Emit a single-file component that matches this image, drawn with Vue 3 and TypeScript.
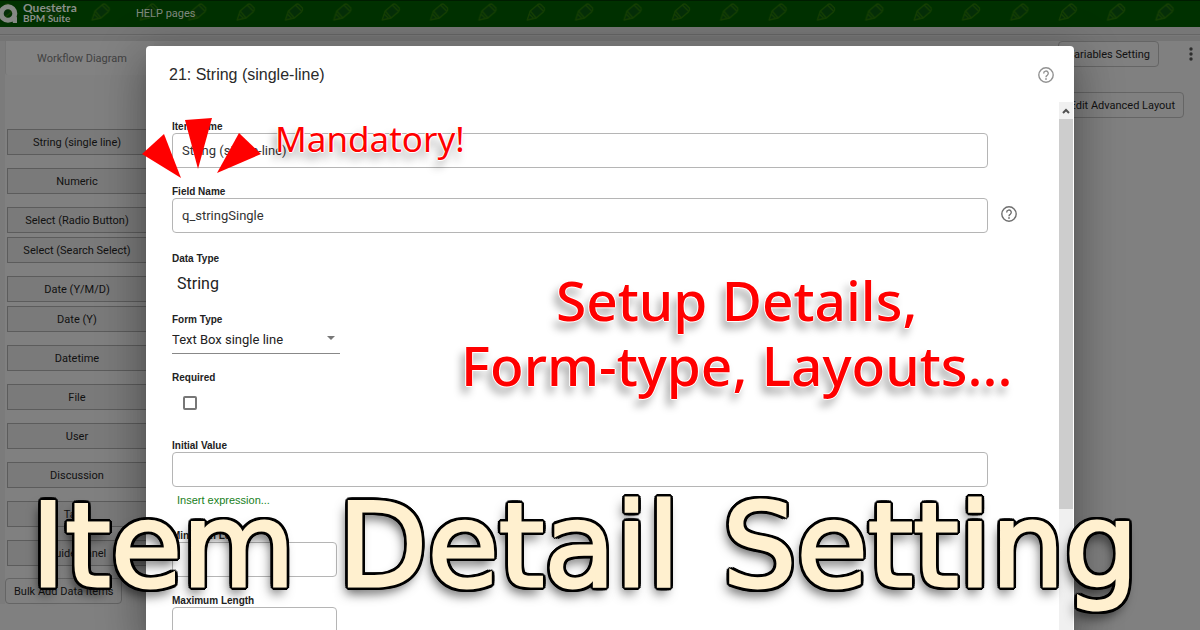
<script setup lang="ts">
import { ref } from 'vue'

const itemGroups: string[][] = [
  ['String (single line)'],
  ['Numeric'],
  ['Select (Radio Button)', 'Select (Search Select)'],
  ['Date (Y/M/D)', 'Date (Y)'],
  ['Datetime'],
  ['File'],
  ['User'],
  ['Discussion'],
  ['Table'],
  ['Guide Panel'],
]

const itemName = ref('String (single-line)')
const fieldName = ref('q_stringSingle')
const formType = ref('Text Box single line')
const required = ref(false)
const initialValue = ref('')
const minLength = ref('')
const maxLength = ref('')
</script>

<template>
  <div class="screen">
    <div class="page">
      <header class="topbar">
        <svg class="pencils" aria-hidden="true">
          <defs>
            <pattern id="pencil" x="77" y="0" width="48.36" height="27" patternUnits="userSpaceOnUse">
              <g fill="#052e08" stroke="#153f03" stroke-width="1.3" stroke-linejoin="round">
                <path d="M15 19 L18 10 L25 4 Q27 2 29 4 L32 7 Q33 9 31 11 L24 17 Z" />
                <path d="M18 10 L24 17 M25 4 L31 10 M17 13 L21 17" fill="none" />
              </g>
            </pattern>
          </defs>
          <rect width="100%" height="27" fill="url(#pencil)" />
        </svg>
        <a class="brand" href="#">
          <svg width="18" height="22" viewBox="0 0 18 22" aria-hidden="true">
            <circle cx="8" cy="12.5" r="6.8" fill="none" stroke="#858985" stroke-width="5" />
            <path d="M11 17 L17 16 L17 22 L13 22Z" fill="#858985" />
          </svg>
          <span class="brand-text"><b>Questetra</b><span>BPM Suite</span></span>
        </a>
        <a class="help-link" href="#">HELP pages</a>
      </header>
      <div class="subbar"></div>
      <div class="workspace">
        <aside class="sidebar">
          <a class="tab" href="#">Workflow Diagram</a>
          <div class="palette">
            <div v-for="group in itemGroups" :key="group[0]" class="group">
              <button v-for="name in group" :key="name" type="button" class="item">{{ name }}</button>
            </div>
          </div>
          <button type="button" class="outlined bulk">Bulk Add Data Items</button>
        </aside>
        <div class="tools">
          <div class="tool-row">
            <button type="button" class="outlined">Variables Setting</button>
            <button type="button" class="more" aria-label="More">
              <svg width="4" height="14" viewBox="0 0 4 14"><g fill="#2d2d2d"><circle cx="2" cy="2" r="1.7" /><circle cx="2" cy="7" r="1.7" /><circle cx="2" cy="12" r="1.7" /></g></svg>
            </button>
          </div>
          <button type="button" class="outlined layout">Edit Advanced Layout</button>
        </div>
      </div>
    </div>

    <div class="overlay">
      <section class="dialog" role="dialog" aria-labelledby="dlg-title">
        <div class="dialog-head">
          <h2 id="dlg-title">21: String (single-line)</h2>
          <button type="button" class="help faint" aria-label="Help">
            <svg width="16" height="16" viewBox="0 0 16 16"><circle cx="8" cy="8" r="7.2" fill="none" stroke="currentColor" stroke-width="1.4" /><path d="M5.7 6.5 A2.3 2.3 0 1 1 9.2 8.3 Q8 9 8 10.2" fill="none" stroke="currentColor" stroke-width="1.4" /><rect x="7.2" y="11.2" width="1.6" height="1.6" fill="currentColor" /></svg>
          </button>
        </div>
        <div class="dialog-main">
          <form class="fields" @submit.prevent>
            <div class="field">
              <label for="item-name">Item Name</label>
              <input id="item-name" v-model="itemName" class="box" type="text" />
            </div>
            <div class="field">
              <label for="field-name">Field Name</label>
              <div class="with-help">
                <input id="field-name" v-model="fieldName" class="box" type="text" />
                <button type="button" class="help" aria-label="Field name help">
                  <svg width="16" height="16" viewBox="0 0 16 16"><circle cx="8" cy="8" r="7.2" fill="none" stroke="currentColor" stroke-width="1.4" /><path d="M5.7 6.5 A2.3 2.3 0 1 1 9.2 8.3 Q8 9 8 10.2" fill="none" stroke="currentColor" stroke-width="1.4" /><rect x="7.2" y="11.2" width="1.6" height="1.6" fill="currentColor" /></svg>
                </button>
              </div>
            </div>
            <div class="field type">
              <span class="label">Data Type</span>
              <span class="value">String</span>
            </div>
            <div class="field kind">
              <label for="form-type">Form Type</label>
              <div class="select">
                <select id="form-type" v-model="formType">
                  <option>Text Box single line</option>
                </select>
                <svg width="8" height="4" viewBox="0 0 8 4" aria-hidden="true"><path d="M0 0H8L4 4Z" fill="#777" /></svg>
              </div>
            </div>
            <div class="field req">
              <label for="required">Required</label>
              <input id="required" v-model="required" class="check" type="checkbox" />
            </div>
            <div class="field init">
              <label for="initial">Initial Value</label>
              <input id="initial" v-model="initialValue" class="box" type="text" />
              <a class="expr" href="#">Insert expression...</a>
            </div>
            <div class="field">
              <label for="min-length">Minimum Length</label>
              <input id="min-length" v-model="minLength" class="box short" type="text" />
            </div>
            <div class="field">
              <label for="max-length">Maximum Length</label>
              <input id="max-length" v-model="maxLength" class="box short" type="text" />
            </div>
          </form>
          <div class="scrollbar" aria-hidden="true">
            <div class="arrow"><svg width="8" height="6" viewBox="0 0 8 6"><path d="M1 5 L4 2 L7 5" fill="none" stroke="#505050" stroke-width="2" /></svg></div>
            <div class="thumb"></div>
          </div>
        </div>
      </section>
    </div>

    <svg class="rays" width="120" height="62" viewBox="0 0 120 62" aria-hidden="true">
      <g fill="#f00">
        <path d="M0 36 L22 16 L39 60Z" />
        <path d="M43 2 L70 0 L56 51Z" />
        <path d="M97 15 L119 36 L75 55Z" />
      </g>
    </svg>
    <p class="note mandatory">Mandatory!</p>
    <p class="note details">Setup Details,<br />Form-type, Layouts...</p>
    <h1 class="headline"><span>Item</span> <span>Detail</span> <span>Setting</span></h1>
  </div>
</template>

<style>
body {
  margin: 0;
}
</style>

<style scoped>
.screen {
  position: relative;
  height: 100vh;
  overflow: hidden;
  background: #808080;
  font-family: "Liberation Sans", Arial, sans-serif;
  color: #111;
}
.screen * {
  box-sizing: border-box;
}
a {
  text-decoration: none;
  color: inherit;
}
button {
  font: inherit;
  color: inherit;
  padding: 0;
  border: 0;
  background: none;
}
.topbar {
  position: relative;
  display: flex;
  height: 27px;
  background: #003100;
  border-top: 1px solid #001c00;
}
.pencils {
  position: absolute;
  inset: 0;
  width: 100%;
  height: 26px;
}
.brand {
  position: relative;
  display: flex;
  width: 136px;
  gap: 5px;
  color: #8a8f8a;
}
.brand-text {
  display: flex;
  flex-direction: column;
  padding-top: 2px;
  font-family: Lato, sans-serif;
  font-size: 10px;
  line-height: 10px;
}
.brand-text b {
  font-size: 12px;
}
.brand-text span {
  font-weight: 700;
}
.help-link {
  position: relative;
  padding-top: 6px;
  font-family: Roboto, sans-serif;
  font-size: 11px;
  line-height: 14px;
  color: #808980;
}
.subbar {
  height: 14px;
  background: linear-gradient(#777 0 7px, #666 7px 8px, #797979 8px 9px, #747474 9px);
}
.workspace {
  display: flex;
  justify-content: space-between;
  font-family: Roboto, "Liberation Sans", sans-serif;
  font-size: 11px;
}
.sidebar {
  width: 154px;
  padding-left: 5px;
  background: linear-gradient(90deg, #7b7b7b 5px, transparent 5px);
}
.tab {
  display: block;
  height: 34px;
  padding-left: 4px;
  border-left: 1px solid #767676;
  border-bottom-left-radius: 3px;
  background: #828282;
  line-height: 36px;
  text-align: center;
  color: #414141;
}
.palette {
  display: flex;
  flex-direction: column;
  gap: 13px;
  padding: 54px 7px 0 2px;
}
.group {
  display: flex;
  flex-direction: column;
  gap: 4px;
}
.item {
  height: 26px;
  border: 1px solid #5c5c5c;
  background: #7a7a7a;
}
.outlined {
  height: 26px;
  padding: 0 8px;
  border: 1px solid #656565;
  border-radius: 4px;
  white-space: nowrap;
}
.bulk {
  margin-top: 12px;
}
.tools {
  display: flex;
  flex-direction: column;
  align-items: flex-end;
  padding-right: 7px;
}
.tool-row {
  display: flex;
  align-items: center;
  gap: 30px;
}
.layout {
  margin: 25px 9px 0 0;
}
.more {
  line-height: 0;
}
.overlay {
  position: absolute;
  inset: 46px 126px 0 146px;
  display: flex;
}
.dialog {
  display: flex;
  flex: 1;
  flex-direction: column;
  border-radius: 4px 4px 0 0;
  background: #fff;
  box-shadow: 0 11px 15px -7px rgba(0, 0, 0, 0.2), 0 24px 38px 3px rgba(0, 0, 0, 0.14), 0 9px 46px 8px rgba(0, 0, 0, 0.2);
}
.dialog-head {
  display: flex;
  align-items: center;
  justify-content: space-between;
  height: 56px;
  padding: 2px 20px 0 23px;
}
h2 {
  margin: 0;
  font-size: 16px;
  font-weight: 400;
  line-height: 20px;
  color: #2a2a2a;
}
.help {
  flex: none;
  line-height: 0;
  color: #6f6f6f;
}
.faint {
  color: #929292;
}
.dialog-main {
  display: flex;
  flex: 1;
  min-height: 0;
  justify-content: space-between;
}
.fields {
  display: flex;
  flex: 1;
  flex-direction: column;
  gap: 18px;
  min-width: 0;
  padding: 19px 42px 0 26px;
  overflow: hidden;
}
.field {
  display: flex;
  flex: none;
  flex-direction: column;
  align-items: flex-start;
}
.field label,
.label {
  height: 12px;
  font-family: "Liberation Sans", Arial, sans-serif;
  font-size: 10px;
  font-weight: 700;
  line-height: 12px;
  color: #222;
}
.box {
  width: calc(100% - 29px);
  height: 35px;
  padding: 0 9px;
  border: 1px solid #b5b5b5;
  border-radius: 4px;
  background: #fff;
  font-family: Roboto, sans-serif;
  font-size: 13px;
  color: #333;
}
.short {
  width: 165px;
}
.with-help {
  display: flex;
  align-items: center;
  gap: 13px;
  width: 100%;
}
.with-help .help {
  padding-bottom: 4px;
}
.type {
  margin-top: 2px;
  gap: 9px;
}
.value {
  padding-left: 5px;
  font-family: Roboto, sans-serif;
  font-size: 16px;
  line-height: 20px;
  color: #222;
}
.kind {
  margin-top: 2px;
}
.select {
  position: relative;
  width: 168px;
  border-bottom: 1px solid #888;
}
.select select {
  width: 100%;
  height: 27px;
  padding: 0;
  border: 0;
  appearance: none;
  background: transparent;
  font-family: Roboto, sans-serif;
  font-size: 13px;
  color: #222;
}
.select svg {
  position: absolute;
  right: 5px;
  top: 10px;
}
.req {
  gap: 12px;
}
.check {
  width: 14px;
  height: 14px;
  margin: 0 0 0 11px;
  border: 2px solid #777;
  border-radius: 2px;
  appearance: none;
}
.init {
  margin: 12px 0 5px;
}
.expr {
  padding: 7px 0 0 5px;
  font-size: 11px;
  line-height: 13px;
  color: #17801a;
}
.scrollbar {
  width: 14px;
  margin-right: 1px;
  background: #f0f0f0;
}
.arrow {
  display: flex;
  align-items: center;
  justify-content: center;
  height: 17px;
}
.thumb {
  height: 390px;
  background: #cdcdcd;
}
.rays {
  position: absolute;
  left: 142px;
  top: 118px;
}
.note {
  position: absolute;
  margin: 0;
  font-family: "Noto Sans", sans-serif;
  color: #f00;
  text-align: center;
  white-space: nowrap;
  text-shadow: 1px 0 #fff, -1px 0 #fff, 0 1px #fff, 0 -1px #fff, -4px 7px 9px rgba(0, 0, 0, 0.4);
}
.mandatory {
  left: 275px;
  top: 115px;
  font-size: 35px;
  line-height: 48px;
}
.details {
  left: 461px;
  top: 267px;
  font-size: 55px;
  font-weight: 500;
  line-height: 65px;
}
.headline {
  position: absolute;
  left: 31px;
  top: 477px;
  display: flex;
  gap: 43px;
  margin: 0;
  font-family: "DejaVu Sans", Verdana, sans-serif;
  font-size: 116px;
  font-weight: 400;
  line-height: 138px;
  white-space: nowrap;
  color: #fff0cf;
  -webkit-text-stroke: 3px #fff0cf;
  text-shadow: 4px 0 #000, -4px 0 #000, 0 4px #000, 0 -4px #000, 3px 3px #000, -3px 3px #000, 3px -3px #000, -3px -3px #000, 4px 2px #000, -4px 2px #000, 4px -2px #000, -4px -2px #000, 2px 4px #000, -2px 4px #000, 2px -4px #000, -2px -4px #000, -3px 7px 12px rgba(0, 0, 0, 0.7);
}
</style>
